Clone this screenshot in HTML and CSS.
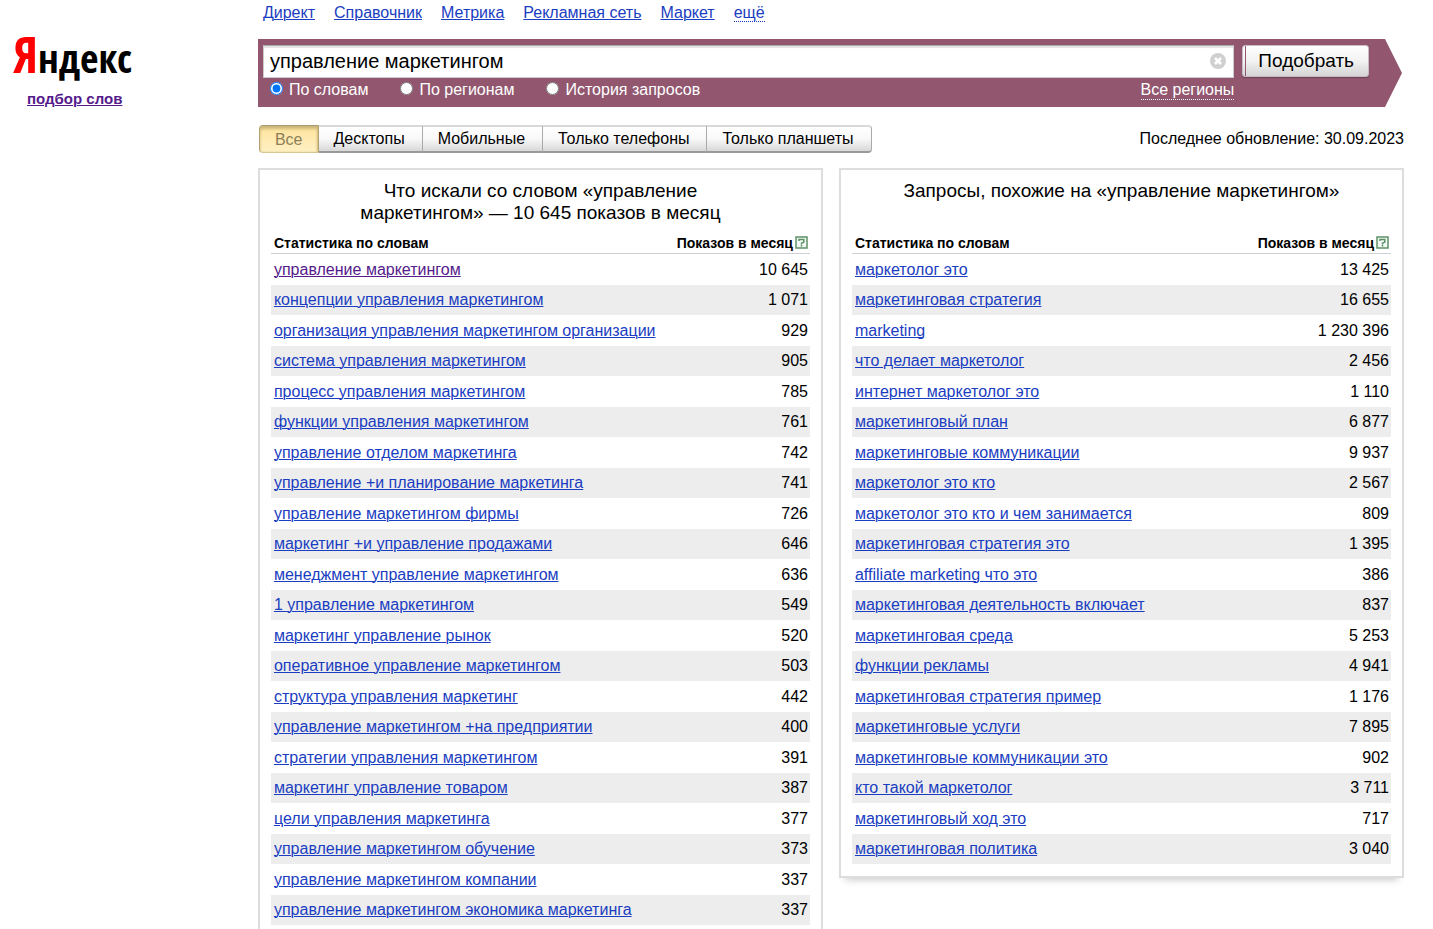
FILE: index.html
```html
<!DOCTYPE html>
<html lang="ru">
<head>
<meta charset="utf-8">
<title>Подбор слов</title>
<link rel="stylesheet" href="styles.css">
</head>
<body>
<div class="page">
  <aside class="brand">
    <a class="logo" href="#"><span class="logo-first">Я</span><span class="logo-rest">ндекс</span></a>
    <a class="service" href="#">подбор слов</a>
  </aside>
  <main class="content">
    <nav class="nav">
      <a href="#">Директ</a>
      <a href="#">Справочник</a>
      <a href="#">Метрика</a>
      <a href="#">Рекламная сеть</a>
      <a href="#">Маркет</a>
      <a class="nav-more" href="#">ещё</a>
    </nav>
    <form class="search">
      <div class="search-main">
        <div class="field">
          <input class="query" type="text" aria-label="Запрос" value="управление маркетингом">
          <button class="clear" type="button" aria-label="Очистить">
            <svg width="16" height="16" viewBox="0 0 16 16"><circle cx="8" cy="8" r="8" fill="#d0d0d0"/><path d="M5 5l6 6M11 5l-6 6" stroke="#fff" stroke-width="2.6"/></svg>
          </button>
        </div>
        <div class="options">
          <label class="option"><input type="radio" name="mode" checked>По словам</label>
          <label class="option"><input type="radio" name="mode">По регионам</label>
          <label class="option"><input type="radio" name="mode">История запросов</label>
          <a class="regions" href="#">Все регионы</a>
        </div>
      </div>
      <button class="submit" type="button">Подобрать</button>
    </form>
    <div class="toolbar">
      <div class="tabs">
        <button class="tab tab-active" type="button">Все</button>
        <button class="tab" type="button">Десктопы</button>
        <button class="tab" type="button">Мобильные</button>
        <button class="tab" type="button">Только телефоны</button>
        <button class="tab" type="button">Только планшеты</button>
      </div>
      <div class="updated">Последнее обновление: 30.09.2023</div>
    </div>
    <div class="panels">
      <section class="panel panel-open">
        <h2 class="title">Что искали со словом «управление маркетингом» — 10 645 показов в месяц</h2>
        <table class="stats">
          <thead><tr><th>Статистика по словам</th><th class="num">Показов в месяц<svg class="help" width="13" height="13" viewBox="0 0 13 13"><rect x="1" y="1" width="11" height="11" fill="#f2f8f3" stroke="#5c9168" stroke-width="1.5"/><path d="M4 5V3.5h4.8v2.6L6.5 7.2v1.2M6.5 9v1.5" fill="none" stroke="#5c9168" stroke-width="1.5"/></svg></th></tr></thead>
          <tbody>
            <tr><td><a class="visited" href="#">управление маркетингом</a></td><td class="num">10 645</td></tr>
            <tr><td><a href="#">концепции управления маркетингом</a></td><td class="num">1 071</td></tr>
            <tr><td><a href="#">организация управления маркетингом организации</a></td><td class="num">929</td></tr>
            <tr><td><a href="#">система управления маркетингом</a></td><td class="num">905</td></tr>
            <tr><td><a href="#">процесс управления маркетингом</a></td><td class="num">785</td></tr>
            <tr><td><a href="#">функции управления маркетингом</a></td><td class="num">761</td></tr>
            <tr><td><a href="#">управление отделом маркетинга</a></td><td class="num">742</td></tr>
            <tr><td><a href="#">управление +и планирование маркетинга</a></td><td class="num">741</td></tr>
            <tr><td><a href="#">управление маркетингом фирмы</a></td><td class="num">726</td></tr>
            <tr><td><a href="#">маркетинг +и управление продажами</a></td><td class="num">646</td></tr>
            <tr><td><a href="#">менеджмент управление маркетингом</a></td><td class="num">636</td></tr>
            <tr><td><a href="#">1 управление маркетингом</a></td><td class="num">549</td></tr>
            <tr><td><a href="#">маркетинг управление рынок</a></td><td class="num">520</td></tr>
            <tr><td><a href="#">оперативное управление маркетингом</a></td><td class="num">503</td></tr>
            <tr><td><a href="#">структура управления маркетинг</a></td><td class="num">442</td></tr>
            <tr><td><a href="#">управление маркетингом +на предприятии</a></td><td class="num">400</td></tr>
            <tr><td><a href="#">стратегии управления маркетингом</a></td><td class="num">391</td></tr>
            <tr><td><a href="#">маркетинг управление товаром</a></td><td class="num">387</td></tr>
            <tr><td><a href="#">цели управления маркетинга</a></td><td class="num">377</td></tr>
            <tr><td><a href="#">управление маркетингом обучение</a></td><td class="num">373</td></tr>
            <tr><td><a href="#">управление маркетингом компании</a></td><td class="num">337</td></tr>
            <tr><td><a href="#">управление маркетингом экономика маркетинга</a></td><td class="num">337</td></tr>
          </tbody>
        </table>
      </section>
      <section class="panel">
        <h2 class="title">Запросы, похожие на «управление маркетингом»</h2>
        <table class="stats">
          <thead><tr><th>Статистика по словам</th><th class="num">Показов в месяц<svg class="help" width="13" height="13" viewBox="0 0 13 13"><rect x="1" y="1" width="11" height="11" fill="#f2f8f3" stroke="#5c9168" stroke-width="1.5"/><path d="M4 5V3.5h4.8v2.6L6.5 7.2v1.2M6.5 9v1.5" fill="none" stroke="#5c9168" stroke-width="1.5"/></svg></th></tr></thead>
          <tbody>
            <tr><td><a href="#">маркетолог это</a></td><td class="num">13 425</td></tr>
            <tr><td><a href="#">маркетинговая стратегия</a></td><td class="num">16 655</td></tr>
            <tr><td><a href="#">marketing</a></td><td class="num">1 230 396</td></tr>
            <tr><td><a href="#">что делает маркетолог</a></td><td class="num">2 456</td></tr>
            <tr><td><a href="#">интернет маркетолог это</a></td><td class="num">1 110</td></tr>
            <tr><td><a href="#">маркетинговый план</a></td><td class="num">6 877</td></tr>
            <tr><td><a href="#">маркетинговые коммуникации</a></td><td class="num">9 937</td></tr>
            <tr><td><a href="#">маркетолог это кто</a></td><td class="num">2 567</td></tr>
            <tr><td><a href="#">маркетолог это кто и чем занимается</a></td><td class="num">809</td></tr>
            <tr><td><a href="#">маркетинговая стратегия это</a></td><td class="num">1 395</td></tr>
            <tr><td><a href="#">affiliate marketing что это</a></td><td class="num">386</td></tr>
            <tr><td><a href="#">маркетинговая деятельность включает</a></td><td class="num">837</td></tr>
            <tr><td><a href="#">маркетинговая среда</a></td><td class="num">5 253</td></tr>
            <tr><td><a href="#">функции рекламы</a></td><td class="num">4 941</td></tr>
            <tr><td><a href="#">маркетинговая стратегия пример</a></td><td class="num">1 176</td></tr>
            <tr><td><a href="#">маркетинговые услуги</a></td><td class="num">7 895</td></tr>
            <tr><td><a href="#">маркетинговые коммуникации это</a></td><td class="num">902</td></tr>
            <tr><td><a href="#">кто такой маркетолог</a></td><td class="num">3 711</td></tr>
            <tr><td><a href="#">маркетинговый ход это</a></td><td class="num">717</td></tr>
            <tr><td><a href="#">маркетинговая политика</a></td><td class="num">3 040</td></tr>
          </tbody>
        </table>
      </section>
    </div>
  </main>
</div>
</body>
</html>
```

FILE: styles.css
```css
* { box-sizing: border-box; }
body {
  margin: 0;
  background: #fff;
  color: #000;
  font: 16px/20px "Liberation Sans", Arial, sans-serif;
}
button, input { font-family: inherit; }
a { color: #1a3dc1; text-underline-offset: 1px; text-decoration-thickness: 1px; }
.page { display: grid; grid-template-columns: 18% 1fr; min-height: 100vh; }

.brand { display: flex; flex-direction: column; align-items: flex-start; padding: 24px 0 0 13px; }
.logo {
  height: 65px;
  line-height: 60px;
  text-decoration: none;
  color: #000;
  font-family: "Open Sans Condensed", "Roboto Condensed", "Noto Sans Condensed", "Open Sans", sans-serif;
  white-space: nowrap;
}
.logo-first { color: #f00; font-size: 50px; }
.logo-rest { font-size: 40px; }
.service { margin-left: 14px; color: #551a8b; font-size: 15px; font-weight: bold; }

.content { display: flex; flex-direction: column; padding-right: 29px; min-width: 0; }
.nav { display: flex; gap: 19px; padding: 3px 5px 0; height: 39px; }
.nav-more { height: 19px; text-decoration: none; border-bottom: 1px dotted #1a3dc1; }

.search {
  display: flex;
  align-items: flex-start;
  gap: 8px;
  margin-right: 2px;
  padding: 6px 33px 6px 5px;
  background: #92576f;
  clip-path: polygon(0 0, calc(100% - 17px) 0, 100% 50%, calc(100% - 17px) 100%, 0 100%);
}
.search-main { flex: 1; }
.field {
  display: flex;
  align-items: center;
  height: 33px;
  padding: 0 7px 0 6px;
  background: #fff;
  border: 1px solid #ccc;
  border-top-color: #aaa;
  box-shadow: inset 0 2px 1px #e4e4e4;
}
.query { flex: 1; min-width: 0; padding: 0 0 2px; border: 0; outline: 0; background: none; font-size: 20px; line-height: 24px; }
.clear { display: flex; padding: 0 0 1px; border: 0; background: none; }
.options { display: flex; height: 23px; padding: 1px 0 0 7px; gap: 32px; line-height: 22px; color: #fff; }
.option { display: flex; align-items: center; gap: 6px; height: 22px; }
.option input { width: 13px; height: 13px; margin: 0 0 3px; }
.regions { height: 21px; margin-left: auto; color: #fff; text-decoration: none; border-bottom: 1px dotted #fff; }
.submit {
  height: 32px;
  padding: 0 14px 0 15px;
  border: 1px solid #c9bcc2;
  border-radius: 3px;
  background: linear-gradient(#92576f, #92576f) 2px 0 / 1px 100% no-repeat, linear-gradient(#fff, #f2f2f2 50%, #d4d4d4);
  box-shadow: 0 1px 1px #6d4153;
  font-size: 19px;
  line-height: 28px;
  color: #000;
}

.toolbar { display: flex; justify-content: space-between; padding: 18px 0 15px 1px; }
.tabs { display: flex; height: 28px; }
.tab {
  padding: 0 17px 0 15px;
  border: solid #aaa;
  border-width: 2px 1px 2px 0;
  border-color: #d8d8d8 #aaa #999 #aaa;
  background: linear-gradient(#fff, #f8f8f8 50%, #d8d8d8);
  font-size: 16px;
  line-height: 20px;
  color: #000;
}
.tab:last-child { border-radius: 0 4px 4px 0; }
.tab-active {
  padding: 2px 15px 0;
  border-width: 1px;
  border-color: #a89a70 #b3a270 #d4c795 #b3a270;
  border-radius: 4px 0 0 4px;
  background: linear-gradient(#ffe49c, #fff0c4);
  box-shadow: inset 0 3px 3px #cbb87a, inset -1px 0 2px #dac88d;
  color: #8c7f57;
}
.updated { line-height: 28px; }

.panels { display: grid; grid-template-columns: 1fr 1fr; gap: 16px; align-items: start; flex: 1; }
.panel {
  padding: 10px 11px 12px;
  border: 2px solid #ddd;
  box-shadow: 0 8px 7px -6px #ccc;
}
.panel-open { align-self: stretch; border-bottom: 0; padding-bottom: 0; box-shadow: none; }
.title { min-height: 44px; margin: 0 0 7px; font-size: 19px; font-weight: normal; line-height: 22px; text-align: center; text-wrap: balance; }
.stats { width: 100%; border-collapse: separate; border-spacing: 0; }
.stats th { height: 23px; padding: 1px 3px 0; border-bottom: 1px solid #cfcfd6; font-size: 14px; line-height: 20px; text-align: left; }
.stats td { height: 31px; padding: 0 3px; }
.stats tr:nth-child(even) td { height: 30px; background: #ededed; }
.stats th.num, .stats td.num { padding-right: 2px; text-align: right; white-space: nowrap; }
.help { margin-left: 2px; vertical-align: -1px; }
.visited { color: #551a8b; }
```
